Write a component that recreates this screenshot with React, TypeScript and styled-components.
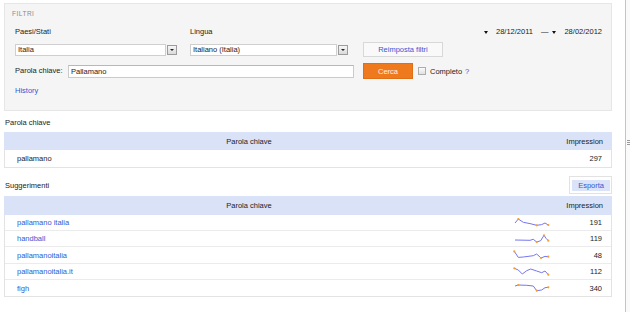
import React from 'react';
import styled, { createGlobalStyle } from 'styled-components';

const LINK = '#3159d4';

const GlobalStyle = createGlobalStyle`
  html, body {
    margin: 0;
    padding: 0;
    background: #fff;
  }
  body {
    font-family: 'Liberation Sans', Arial, sans-serif;
    font-size: 7.5px;
    color: #222;
  }
`;

const Page = styled.div`
  display: flex;
  width: 630px;
  height: 312px;
  overflow: hidden;
`;

const Main = styled.div`
  width: 626px;
  box-sizing: border-box;
  padding: 3px 13px 0 4px;
`;

// the pane splitter on the far right
const Splitter = styled.div`
  flex: 1;
  border-left: 1px solid #c4c4c4;
  background: #fafafa;
  padding: 140px 0 0 1px;
`;

const Grip = styled.div`
  width: 3px;
  height: 5px;
  background: repeating-linear-gradient(to bottom, #9a9a9a 0 1px, transparent 1px 2px);
`;

/* ---------- filter panel ---------- */

const FilterPanel = styled.section`
  height: 108px;
  box-sizing: border-box;
  background: #f5f5f5;
  border: 1px solid #e6e6e6;
  padding: 6px 9px 0 7px;
`;

const PanelTitle = styled.div`
  font-size: 6.5px;
  line-height: 8px;
  letter-spacing: 0.5px;
  color: #8a8a8a;
`;

const Fields = styled.div`
  margin: 8px 0 0 3px;
`;

const FieldRow = styled.div<{ $top?: number; $h: number }>`
  display: flex;
  align-items: center;
  height: ${p => p.$h}px;
  margin-top: ${p => p.$top || 0}px;
`;

const FieldLabel = styled.div<{ $w: number }>`
  width: ${p => p.$w}px;
  flex-shrink: 0;
  line-height: 12px;
`;

const SelectBox = styled.div<{ $w: number; $mr?: number }>`
  display: flex;
  align-items: center;
  width: ${p => p.$w}px;
  margin-right: ${p => p.$mr || 0}px;
  flex-shrink: 0;
`;

const SelectField = styled.div`
  flex: 1;
  height: 12px;
  box-sizing: border-box;
  background: #fff;
  border: 1px solid #cfcfcf;
  padding-left: 2px;
  line-height: 10px;
`;

const SelectArrow = styled.div`
  width: 10px;
  height: 10px;
  margin-left: 1px;
  box-sizing: border-box;
  border: 1px solid #9c9c9c;
  background: linear-gradient(#f6f6f6, #dadada);
  display: flex;
  align-items: center;
  justify-content: center;

  &::after {
    content: '';
    border-left: 2px solid transparent;
    border-right: 2px solid transparent;
    border-top: 2px solid #222;
  }
`;

const ResetButton = styled.div`
  width: 80px;
  height: 15px;
  box-sizing: border-box;
  border: 1px solid #d8d8d8;
  background: #f9f9f9;
  color: ${LINK};
  display: flex;
  align-items: center;
  justify-content: center;
`;

const DateRange = styled.div`
  margin-left: auto;
  display: flex;
  align-items: center;
  line-height: 12px;
`;

const DropTriangle = styled.span<{ $ml?: number }>`
  width: 0;
  height: 0;
  margin-left: ${p => p.$ml || 0}px;
  margin-right: 8px;
  border-left: 2.5px solid transparent;
  border-right: 2.5px solid transparent;
  border-top: 3px solid #111;
`;

const Dash = styled.span`
  margin-left: 8px;
`;

const TextInput = styled.input`
  width: 286px;
  height: 13px;
  margin-right: 9px;
  box-sizing: border-box;
  border: 1px solid #cbcbcb;
  border-top-color: #b8b8b8;
  background: #fff;
  padding: 0 2px;
  font: inherit;
  color: #222;
  outline: none;
`;

const SearchButton = styled.div`
  width: 50px;
  height: 16px;
  box-sizing: border-box;
  background: #ef7a1d;
  border: 1px solid #e06e16;
  color: #fff0e4;
  display: flex;
  align-items: center;
  justify-content: center;
`;

const CheckBox = styled.span`
  width: 8px;
  height: 8px;
  margin-left: 5px;
  box-sizing: border-box;
  border: 1px solid #adadad;
  background: linear-gradient(#fafafa, #e0e0e0);
`;

const CheckLabel = styled.span`
  margin-left: 4px;
`;

const Help = styled.span`
  margin-left: 3px;
  color: ${LINK};
`;

const HistoryLink = styled.div`
  margin-top: 6px;
  line-height: 12px;
  color: ${LINK};
`;

/* ---------- result tables ---------- */

const SectionBar = styled.div<{ $top: number; $h: number }>`
  display: flex;
  align-items: center;
  justify-content: space-between;
  margin-top: ${p => p.$top}px;
  height: ${p => p.$h}px;
  padding-left: 1px;
`;

const ExportFrame = styled.div`
  border: 1px solid #e2e2e2;
  background: #fff;
  padding: 3px 1px 2px 2px;
`;

const ExportButton = styled.div`
  height: 11px;
  line-height: 11px;
  padding: 0 6px;
  background: #dae3f7;
  color: ${LINK};
`;

const Table = styled.div<{ $top: number }>`
  margin-top: ${p => p.$top}px;
  border: 1px solid #e3e3e3;
  border-top: 0;
`;

const Row = styled.div<{ $h: number }>`
  display: grid;
  grid-template-columns: 490px 60px 1fr;
  align-items: center;
  height: ${p => p.$h}px;
  box-sizing: border-box;
  border-bottom: 1px solid #ebebeb;

  &:last-child {
    border-bottom: 0;
  }
`;

const HeadRow = styled(Row)`
  margin: 0 -1px;
  background: #d9e2f6;
  border-bottom: 0;
`;

const HeadCell = styled.div<{ $align: 'center' | 'right' }>`
  text-align: ${p => p.$align};
  padding-right: ${p => (p.$align === 'right' ? 9 : 0)}px;
`;

const KeywordCell = styled.div<{ $link?: boolean }>`
  padding-left: 12px;
  color: ${p => (p.$link ? LINK : '#222')};
`;

const NumberCell = styled.div`
  text-align: right;
  padding-right: 9px;
`;

const TrendCell = styled.div`
  align-self: start;
  height: 100%;
`;

const TrendSvg = styled.svg`
  display: block;
  margin-left: 18px;
`;

type Point = [number, number];

const Sparkline = ({ pts }: { pts: Point[] }) => {
  const ys = pts.map(p => p[1]);
  const hi = ys.indexOf(Math.min(...ys));
  const lo = ys.indexOf(Math.max(...ys));
  const marks = Array.from(new Set([hi, lo, pts.length - 1]));
  return (
    <TrendSvg width="38" height="16" viewBox="0 0 38 16">
      <polyline
        points={pts.map(p => p.join(',')).join(' ')}
        fill="none"
        stroke="#7676f0"
        strokeWidth="1"
        strokeLinejoin="round"
      />
      {marks.map(i => (
        <circle key={i} cx={pts[i][0]} cy={pts[i][1]} r="1.1" fill="#f3a030" />
      ))}
    </TrendSvg>
  );
};

const SUGGESTIONS: { kw: string; n: number; pts: Point[] }[] = [
  {
    kw: 'pallamano italia',
    n: 191,
    pts: [[2, 8], [5.3, 4], [10.3, 7.3], [17, 8.6], [23.7, 10.3], [28.7, 9.6], [32, 8], [35.3, 10]]
  },
  {
    kw: 'handball',
    n: 119,
    pts: [[2, 9], [17, 9.3], [20.3, 8.3], [23.7, 11], [27.7, 9.7], [31, 4.3], [33, 7.3], [35.3, 9.7]]
  },
  {
    kw: 'pallamanoitalia',
    n: 48,
    pts: [[1.3, 4.4], [5.3, 10.4], [10.3, 10], [20.3, 8.7], [23.7, 7], [28, 11], [32, 9.4], [35.3, 9.7]]
  },
  {
    kw: 'pallamanoitalia.it',
    n: 112,
    pts: [[1.3, 4.3], [5.3, 6], [9.3, 10], [13.7, 6.7], [17.7, 5], [23.7, 7], [28.7, 8.7], [32, 7], [35.3, 10.7]]
  },
  {
    kw: 'figh',
    n: 340,
    pts: [[2, 6], [5.3, 5], [13.7, 5.3], [20.3, 6], [23.7, 10.7], [28.7, 10], [32, 7.7], [35.3, 7.3]]
  }
];

export default function App() {
  return (
    <Page>
      <GlobalStyle />
      <Main>
        <FilterPanel>
          <PanelTitle>FILTRI</PanelTitle>
          <Fields>
            <FieldRow $h={12}>
              <FieldLabel $w={175}>Paesi/Stati</FieldLabel>
              <FieldLabel $w={173}>Lingua</FieldLabel>
              <DateRange>
                <DropTriangle />
                <span>28/12/2011</span>
                <Dash>—</Dash>
                <DropTriangle $ml={4} />
                <span>28/02/2012</span>
              </DateRange>
            </FieldRow>
            <FieldRow $top={4} $h={15}>
              <SelectBox $w={162} $mr={13}>
                <SelectField>Italia</SelectField>
                <SelectArrow />
              </SelectBox>
              <SelectBox $w={158} $mr={15}>
                <SelectField>Italiano (Italia)</SelectField>
                <SelectArrow />
              </SelectBox>
              <ResetButton>Reimposta filtri</ResetButton>
            </FieldRow>
            <FieldRow $top={6} $h={16}>
              <FieldLabel $w={53}>Parola chiave:</FieldLabel>
              <TextInput defaultValue="Pallamano" />
              <SearchButton>Cerca</SearchButton>
              <CheckBox />
              <CheckLabel>Completo</CheckLabel>
              <Help>?</Help>
            </FieldRow>
            <HistoryLink>History</HistoryLink>
          </Fields>
        </FilterPanel>

        <SectionBar $top={5} $h={12}>Parola chiave</SectionBar>
        <Table $top={4}>
          <HeadRow $h={18}>
            <HeadCell $align="center">Parola chiave</HeadCell>
            <div />
            <HeadCell $align="right">Impression</HeadCell>
          </HeadRow>
          <Row $h={17}>
            <KeywordCell>pallamano</KeywordCell>
            <div />
            <NumberCell>297</NumberCell>
          </Row>
        </Table>

        <SectionBar $top={8} $h={18}>
          <span>Suggerimenti</span>
          <ExportFrame>
            <ExportButton>Esporta</ExportButton>
          </ExportFrame>
        </SectionBar>
        <Table $top={2}>
          <HeadRow $h={18.5}>
            <HeadCell $align="center">Parola chiave</HeadCell>
            <div />
            <HeadCell $align="right">Impression</HeadCell>
          </HeadRow>
          {SUGGESTIONS.map(s => (
            <Row key={s.kw} $h={16.4}>
              <KeywordCell $link>{s.kw}</KeywordCell>
              <TrendCell>
                <Sparkline pts={s.pts} />
              </TrendCell>
              <NumberCell>{s.n}</NumberCell>
            </Row>
          ))}
        </Table>
      </Main>
      <Splitter>
        <Grip />
      </Splitter>
    </Page>
  );
}
